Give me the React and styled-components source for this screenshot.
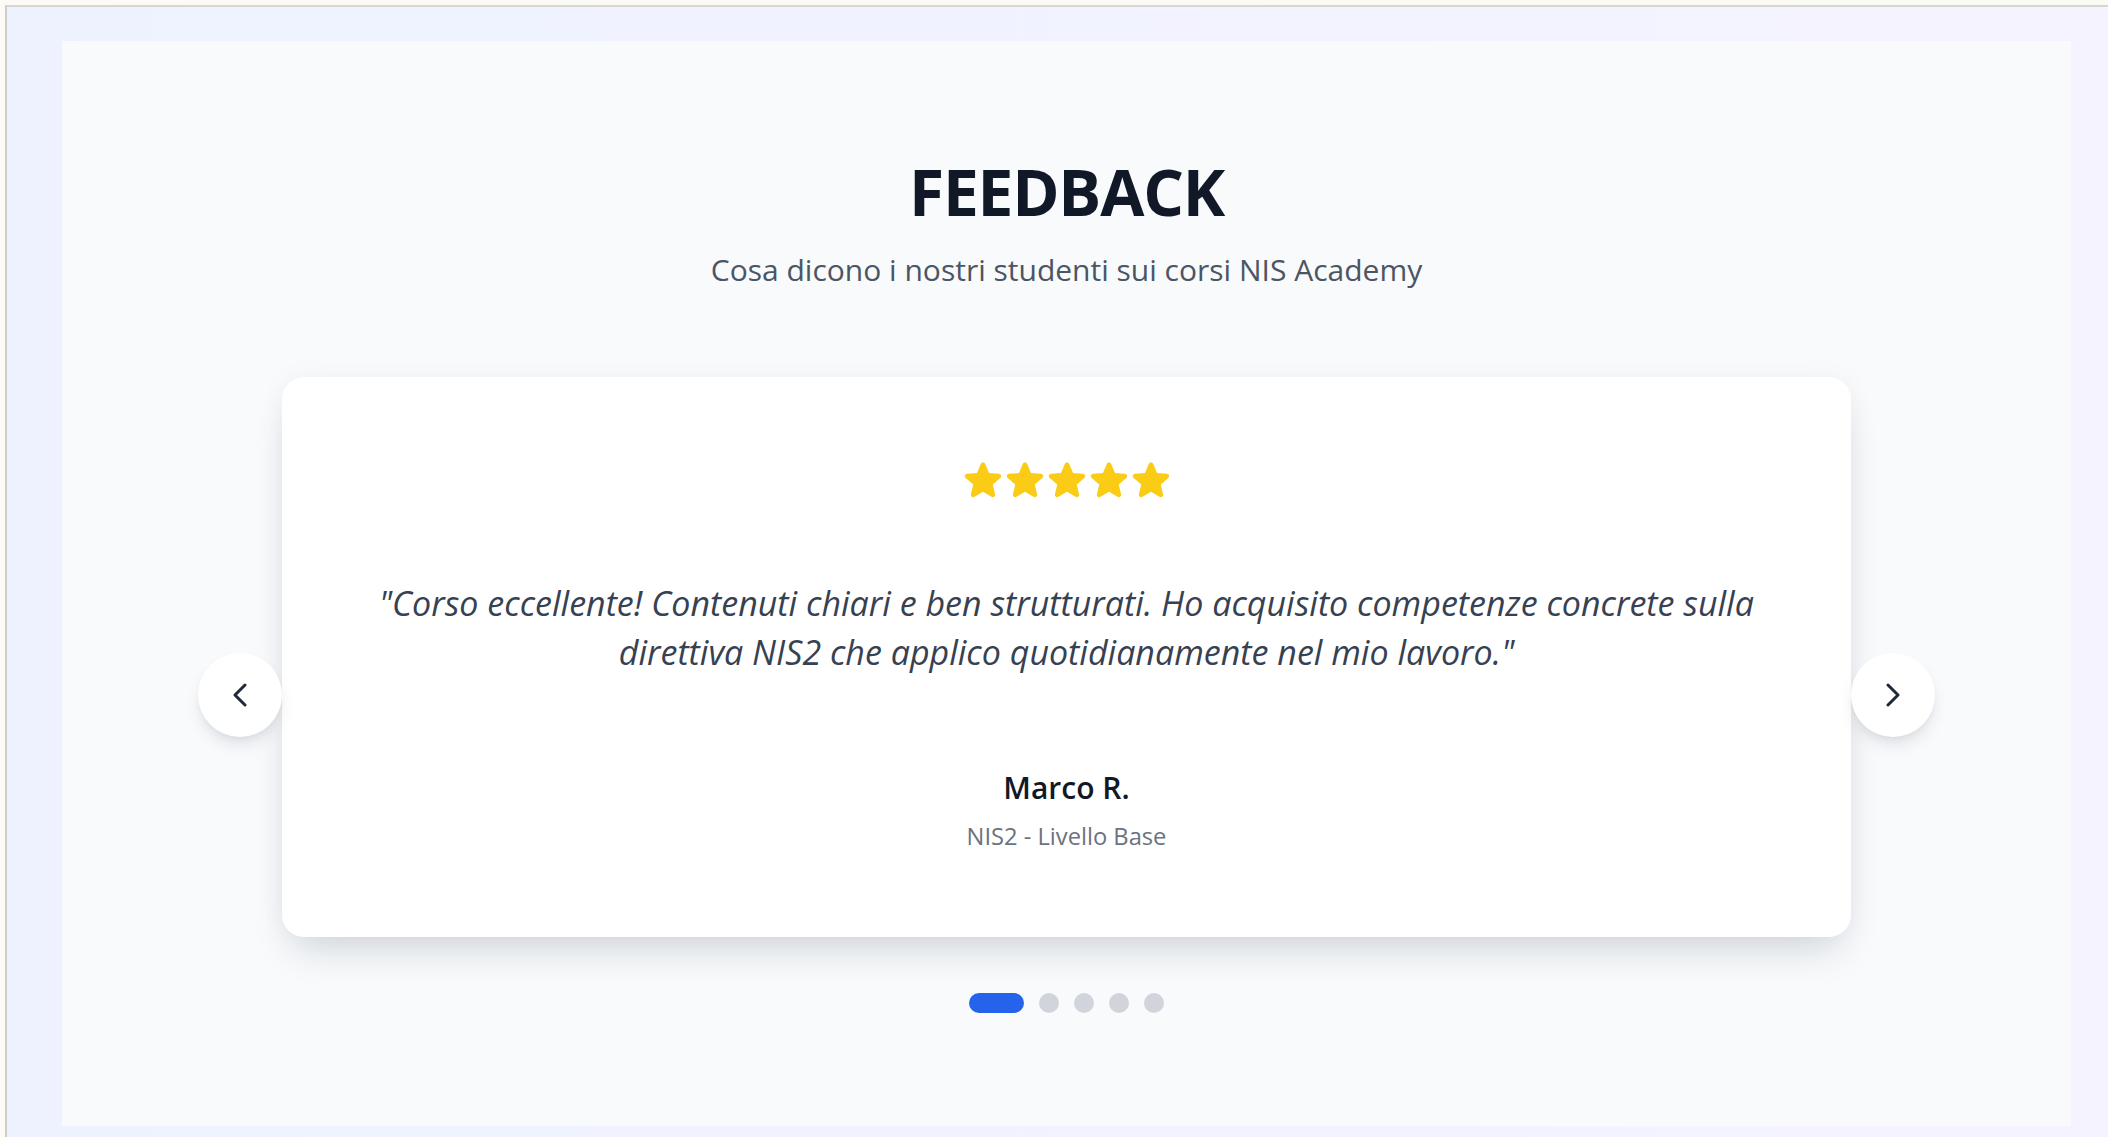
import React, { useState } from "react";
import styled, { createGlobalStyle } from "styled-components";

const GlobalStyle = createGlobalStyle`
  html, body {
    margin: 0;
    padding: 0;
    background: #f8f7f2;
  }
  body {
    font-family: "Open Sans", "Noto Sans", "Liberation Sans", sans-serif;
  }
`;

const feedbacks = [
  {
    text:
      '"Corso eccellente! Contenuti chiari e ben strutturati. Ho acquisito competenze concrete sulla direttiva NIS2 che applico quotidianamente nel mio lavoro."',
    name: "Marco R.",
    course: "NIS2 - Livello Base",
    stars: 5,
  },
  { text: "", name: "", course: "", stars: 5 },
  { text: "", name: "", course: "", stars: 5 },
  { text: "", name: "", course: "", stars: 5 },
  { text: "", name: "", course: "", stars: 5 },
];

function App() {
  const [active, setActive] = useState(0);
  const item = feedbacks[0];

  const prev = () => setActive((active + feedbacks.length - 1) % feedbacks.length);
  const next = () => setActive((active + 1) % feedbacks.length);

  return (
    <>
      <GlobalStyle />
      <Shell>
        <Viewport>
          <Panel>
            <Title>FEEDBACK</Title>
            <Subtitle>Cosa dicono i nostri studenti sui corsi NIS Academy</Subtitle>

            <Carousel>
              <NavButton $side="left" onClick={prev} aria-label="Precedente">
                <Chevron $dir="left" />
              </NavButton>

              <Card>
                <Stars>
                  {Array.from({ length: item.stars }).map((_, i) => (
                    <Star key={i} />
                  ))}
                </Stars>
                <Quote>{item.text}</Quote>
                <Name>{item.name}</Name>
                <Course>{item.course}</Course>
              </Card>

              <Dots>
                {feedbacks.map((_, i) => (
                  <Dot key={i} $active={i === active} onClick={() => setActive(i)} />
                ))}
              </Dots>

              <NavButton $side="right" onClick={next} aria-label="Successivo">
                <Chevron $dir="right" />
              </NavButton>
            </Carousel>
          </Panel>
        </Viewport>
      </Shell>
    </>
  );
}

function Star() {
  return (
    <StarSvg viewBox="1.1 0 21.8 24" width="40" height="44">
      <path
        fill="#facc15"
        d="M10.788 3.21c.448-1.077 1.976-1.077 2.424 0l2.082 5.006 5.404.434c1.164.093 1.636 1.545.749 2.305l-4.117 3.527 1.257 5.273c.271 1.136-.964 2.033-1.960 1.425L12 18.354 7.373 21.18c-.996.608-2.231-.29-1.960-1.425l1.257-5.273-4.117-3.527c-.887-.76-.415-2.212.749-2.305l5.404-.434 2.082-5.005Z"
      />
    </StarSvg>
  );
}

function Chevron({ $dir }) {
  const d = $dir === "left" ? "M13 2 L3 12 L13 22" : "M3 2 L13 12 L3 22";
  return (
    <svg width="16" height="24" viewBox="0 0 16 24">
      <path d={d} fill="none" stroke="#1f2937" strokeWidth="3" strokeLinecap="round" strokeLinejoin="round" />
    </svg>
  );
}

export default App;

const Shell = styled.div`
  min-height: 100vh;
  box-sizing: border-box;
  padding: 5px 0 0 5px;
  background: #fbfaf5;
  display: flex;
`;

const Viewport = styled.div`
  flex: 1;
  border-top: 2px solid #d7d6d2;
  border-left: 2px solid #cdccc8;
  background: linear-gradient(to right, #eef2ff, #f5f3ff);
  padding: 34px 37px 11px 55px;
  display: flex;
`;

const Panel = styled.section`
  flex: 1;
  height: 1085px;
  box-sizing: border-box;
  background: #f8fafc;
  padding-top: 113px;
  display: flex;
  flex-direction: column;
  align-items: center;
`;

const Title = styled.h2`
  margin: 0;
  font-size: 64px;
  line-height: 1.2;
  font-weight: 700;
  color: #111827;
  letter-spacing: -1.2px;
`;

const Subtitle = styled.p`
  margin: 18px 0 0;
  font-size: 30px;
  line-height: 42px;
  color: #4b5563;
`;

const Carousel = styled.div`
  position: relative;
  width: 1569px;
  margin-top: 86px;
`;

const Card = styled.div`
  background: #ffffff;
  border-radius: 22px;
  padding: 81px 86px 85px;
  box-shadow: 0 22px 40px -12px rgba(15, 23, 42, 0.16), 0 0 28px rgba(15, 23, 42, 0.04);
  display: flex;
  flex-direction: column;
  align-items: center;
  text-align: center;
`;

const Stars = styled.div`
  display: flex;
  gap: 2px;
`;

const StarSvg = styled.svg`
  display: block;
`;

const Quote = styled.p`
  margin: 77px 0 0;
  font-size: 34px;
  line-height: 49px;
  font-style: italic;
  color: #374151;
`;

const Name = styled.div`
  margin-top: 93px;
  font-size: 30px;
  line-height: 36px;
  font-weight: 600;
  color: #111827;
`;

const Course = styled.div`
  margin-top: 14px;
  font-size: 23.7px;
  line-height: 32px;
  color: #6b7280;
`;

const Dots = styled.div`
  margin-top: 56px;
  display: flex;
  justify-content: center;
  gap: 15px;
`;

const Dot = styled.button`
  border: none;
  padding: 0;
  cursor: pointer;
  height: 20px;
  width: ${(p) => (p.$active ? "55px" : "20px")};
  border-radius: 10px;
  background: ${(p) => (p.$active ? "#2563eb" : "#d1d5db")};
`;

const NavButton = styled.button`
  position: absolute;
  top: 50%;
  transform: translateY(-50%);
  ${(p) => (p.$side === "left" ? "left: -84px;" : "right: -84px;")}
  width: 84px;
  height: 84px;
  border: none;
  border-radius: 50%;
  background: #ffffff;
  box-shadow: 0 10px 18px -4px rgba(15, 23, 42, 0.12), 0 4px 8px -4px rgba(15, 23, 42, 0.08);
  display: flex;
  align-items: center;
  justify-content: center;
  cursor: pointer;
`;
